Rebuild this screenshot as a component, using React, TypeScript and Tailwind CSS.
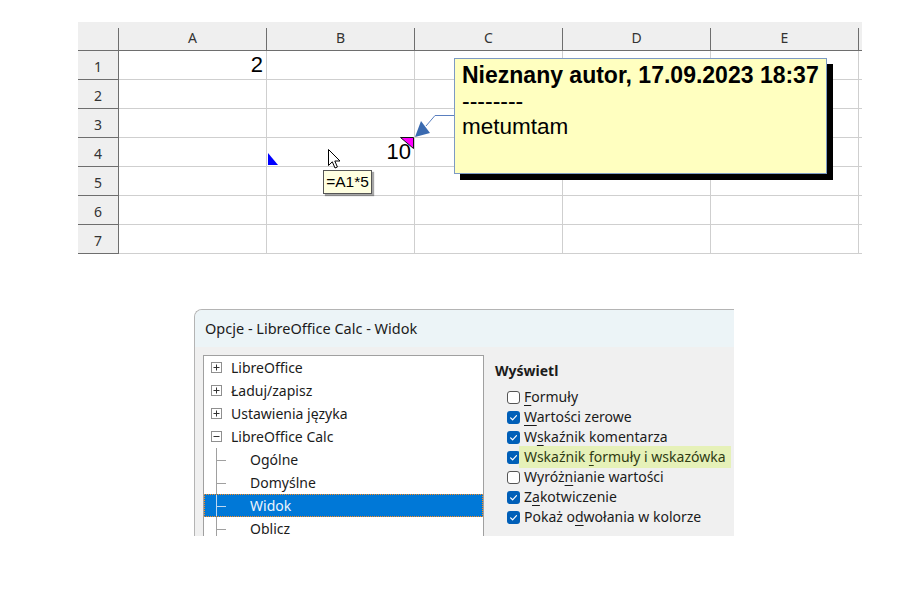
import React from "react";

const cols = ["A", "B", "C", "D", "E"];
const rows = [1, 2, 3, 4, 5, 6, 7];

function HeaderCell({ label, w }: { label: string; w: string }) {
  return (
    <div className={`flex h-full ${w}`}>
      <div className="flex-1 text-center pt-[6px] leading-[20px]">{label}</div>
      <div className="w-px bg-[#6e6e6e] mt-[6px]" />
    </div>
  );
}

function Sheet() {
  return (
    <div className="w-[784px] text-[14px] text-[#333] [font-family:'Noto_Sans',sans-serif]">
      <div className="flex h-[29px] bg-[#efefef] border-b border-[#6e6e6e]">
        <HeaderCell label="" w="w-[41px]" />
        {cols.map((c) => (
          <HeaderCell key={c} label={c} w="w-[148px]" />
        ))}
        <div className="flex-1" />
      </div>
      {rows.map((r) => (
        <div key={r} className="flex h-[29px]">
          <div className="w-[41px] bg-[#efefef] border-r border-b border-[#6e6e6e] flex items-center justify-center pt-[3px]">
            {r}
          </div>
          {cols.map((c) => {
            let content: string | null = null;
            if (r === 1 && c === "A") content = "2";
            if (r === 4 && c === "B") content = "10";
            return (
              <div
                key={c}
                className="w-[148px] border-r border-b border-[#cfcfcf] flex items-end justify-end pr-[3px] pb-[3px] text-black text-[22px] leading-[22px] [font-family:'Liberation_Sans',Arial,sans-serif]"
              >
                {content}
              </div>
            );
          })}
          <div className="flex-1 border-b border-[#cfcfcf]" />
        </div>
      ))}
    </div>
  );
}

function CheckIcon({ checked }: { checked: boolean }) {
  if (!checked)
    return (
      <svg width="13" height="13" viewBox="0 0 13 13" className="shrink-0">
        <rect x="0.5" y="0.5" width="12" height="12" rx="2.5" fill="#fff" stroke="#555" />
      </svg>
    );
  return (
    <svg width="13" height="13" viewBox="0 0 13 13" className="shrink-0">
      <rect x="0" y="0" width="13" height="13" rx="3" fill="#005fb8" />
      <path d="M3.6 6.9 L5.6 8.8 L9.5 4.7" stroke="#fff" strokeWidth="1.2" fill="none" strokeLinecap="round" strokeLinejoin="round" />
    </svg>
  );
}

const checks = [
  { c: false, pre: "", k: "F", post: "ormuły" },
  { c: true, pre: "", k: "W", post: "artości zerowe" },
  { c: true, pre: "W", k: "s", post: "kaźnik komentarza" },
  { c: true, pre: "Wskaźnik ", k: "f", post: "ormuły i wskazówka", hl: true },
  { c: false, pre: "Wyróż", k: "n", post: "ianie wartości" },
  { c: true, pre: "Z", k: "a", post: "kotwiczenie" },
  { c: true, pre: "Pokaż o", k: "d", post: "wołania w kolorze" },
];

type TreeItem = { label: string; kind: "plus" | "minus" | "child"; sel?: boolean };
const tree: TreeItem[] = [
  { label: "LibreOffice", kind: "plus" },
  { label: "Ładuj/zapisz", kind: "plus" },
  { label: "Ustawienia języka", kind: "plus" },
  { label: "LibreOffice Calc", kind: "minus" },
  { label: "Ogólne", kind: "child" },
  { label: "Domyślne", kind: "child" },
  { label: "Widok", kind: "child", sel: true },
  { label: "Oblicz", kind: "child" },
];

function Expander({ minus }: { minus: boolean }) {
  return (
    <svg width="11" height="11" viewBox="0 0 11 11" className="shrink-0">
      <rect x="0.5" y="0.5" width="10" height="10" fill="#fff" stroke="#8f8f8f" />
      <path d="M2.5 5.5 H8.5" stroke="#333" strokeWidth="1" />
      {!minus && <path d="M5.5 2.5 V8.5" stroke="#333" strokeWidth="1" />}
    </svg>
  );
}

function Dialog() {
  return (
    <div className="w-[540px] h-[227px] overflow-hidden rounded-tl-[8px] border-t border-l border-[#b4b4b4] bg-[#f0f0f0] [font-family:'Noto_Sans',sans-serif] text-[#1b1b1b]">
      <div className="h-[37px] bg-[#ecf4f7] flex items-center pl-[10px] text-[14.5px]">
        Opcje - LibreOffice Calc - Widok
      </div>
      <div className="flex">
        <div className="ml-[8px] mt-[8px] w-[281px] h-[300px] bg-white border border-[#a0a0a0] shrink-0">
          {tree.map((t) => (
            <div
              key={t.label}
              className={`h-[23px] flex items-center text-[14px] ${
                t.sel ? "bg-[#0078d7] text-[#eef5fc] border border-dotted border-[#ff8c1a]" : ""
              }`}
            >
              {t.kind === "child" ? (
                <div className={`flex h-full items-center ${t.sel ? "ml-[11px]" : "ml-[12px]"}`}>
                  <div className="relative w-[10px] h-full">
                    <div className={`absolute left-0 top-0 bottom-0 w-px ${t.sel ? "bg-[#bcd7f0]" : "bg-[#a0a0a0]"}`} />
                    <div className={`absolute left-0 top-1/2 w-[10px] h-px ${t.sel ? "bg-[#bcd7f0]" : "bg-[#a0a0a0]"}`} />
                  </div>
                  <span className="ml-[24px]">{t.label}</span>
                </div>
              ) : (
                <div className="flex items-center ml-[7px]">
                  <Expander minus={t.kind === "minus"} />
                  <span className="ml-[9px]">{t.label}</span>
                </div>
              )}
            </div>
          ))}
        </div>
        <div className="pl-[11px] pt-[14px]">
          <div className="font-bold text-[14px] leading-[20px]">Wyświetl</div>
          <div className="mt-[6px] pl-[12px]">
            {checks.map((c, i) => (
              <div key={i} className="h-[20px] flex items-center text-[14px]">
                <CheckIcon checked={c.c} />
                <span
                  className={`ml-[-1px] px-[5px] h-[22px] leading-[22px] whitespace-nowrap ${
                    c.hl ? "bg-[#e6f1b8] text-[#2f3b14]" : ""
                  }`}
                >
                  {c.pre}
                  <span className="underline underline-offset-[3px] decoration-1">{c.k}</span>
                  {c.post}
                </span>
              </div>
            ))}
          </div>
        </div>
      </div>
    </div>
  );
}

export default function App() {
  return (
    <div className="relative w-[914px] h-[596px] bg-white overflow-hidden">
      <div className="pt-[22px] pl-[78px]">
        <Sheet />
      </div>
      <div className="mt-[55px] pl-[194px]">
        <Dialog />
      </div>

      {/* blue triangle (formula indicator) */}
      <svg className="absolute left-[268px] top-[153px]" width="10" height="12" viewBox="0 0 10 12">
        <polygon points="0,0 0,12 10,12" fill="#0000ff" />
      </svg>

      {/* magenta comment indicator */}
      <svg className="absolute left-[400px] top-[137px]" width="14" height="12" viewBox="0 0 14 12">
        <polygon points="0.5,0.5 13.5,0.5 13.5,11.5" fill="#ff00ff" stroke="#111" strokeWidth="1" />
      </svg>

      {/* arrow from comment */}
      <svg className="absolute left-[410px] top-[108px]" width="46" height="34" viewBox="0 0 46 34">
        <polyline points="45,7.5 25,7.5 16,18" fill="none" stroke="#5a7fbf" strokeWidth="1" />
        <polygon points="5,29 11,13 20,25" fill="#3a6ab0" />
      </svg>

      {/* comment box */}
      <div className="absolute left-[454px] top-[58px] w-[373px] h-[116px] bg-[#ffffc0] border border-[#7c9ac4] shadow-[6px_6px_0_#000] pl-[7px] pt-[4px] text-black text-[23px] leading-[25.5px] [font-family:'Liberation_Sans',Arial,sans-serif]">
        <div className="font-bold whitespace-nowrap">Nieznany autor, 17.09.2023 18:37</div>
        <div>--------</div>
        <div className="text-[22.5px]">metumtam</div>
      </div>

      {/* mouse cursor */}
      <svg className="absolute left-[328px] top-[149px]" width="14" height="21" viewBox="0 0 14 21">
        <path d="M0.5 0.5 L0.5 16.5 L4.3 12.8 L7 19 L9.4 18 L6.8 12 L12 12 Z" fill="#fff" stroke="#000" strokeWidth="1" strokeLinejoin="round" />
      </svg>

      {/* formula tooltip */}
      <div className="absolute left-[323px] top-[170px] w-[49px] h-[24px] bg-[#ffffe1] border border-[#555] shadow-[2px_2px_1px_rgba(0,0,0,0.35)] flex items-center justify-center text-[15.5px] text-black [font-family:'Liberation_Sans',Arial,sans-serif]">
        =A1*5
      </div>
    </div>
  );
}
